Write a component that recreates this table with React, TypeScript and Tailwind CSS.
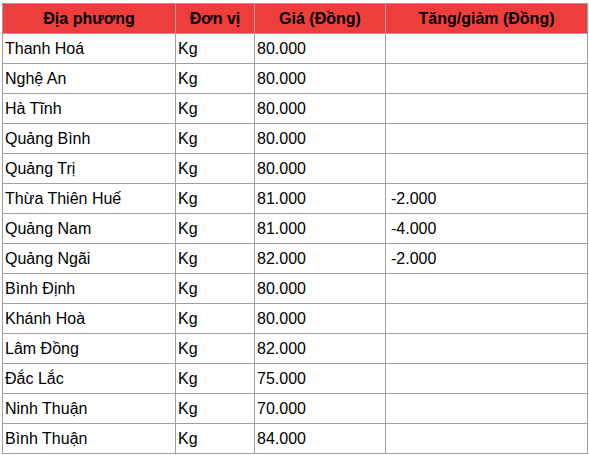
const rows: [string, string, string, string][] = [
  ["Thanh Hoá", "Kg", "80.000", ""],
  ["Nghệ An", "Kg", "80.000", ""],
  ["Hà Tĩnh", "Kg", "80.000", ""],
  ["Quảng Bình", "Kg", "80.000", ""],
  ["Quảng Trị", "Kg", "80.000", ""],
  ["Thừa Thiên Huế", "Kg", "81.000", "-2.000"],
  ["Quảng Nam", "Kg", "81.000", "-4.000"],
  ["Quảng Ngãi", "Kg", "82.000", "-2.000"],
  ["Bình Định", "Kg", "80.000", ""],
  ["Khánh Hoà", "Kg", "80.000", ""],
  ["Lâm Đồng", "Kg", "82.000", ""],
  ["Đắc Lắc", "Kg", "75.000", ""],
  ["Ninh Thuận", "Kg", "70.000", ""],
  ["Bình Thuận", "Kg", "84.000", ""],
];

export default function App() {
  return (
    <div
      className="bg-white w-[589px] h-[455px] pt-[3px] pl-[2px]"
      style={{ fontFamily: '"Liberation Sans", Arial, sans-serif' }}
    >
      <table className="w-[585px] table-fixed border-collapse text-[16px] text-black">
        <colgroup>
          <col className="w-[173px]" />
          <col className="w-[79px]" />
          <col className="w-[131px]" />
          <col className="w-[202px]" />
        </colgroup>
        <thead>
          <tr className="bg-[#ee3d3d]">
            {["Địa phương", "Đơn vị", "Giá (Đồng)", "Tăng/giảm (Đồng)"].map((h) => (
              <th
                key={h}
                className="h-[30px] border border-[#a0a0a0] px-[3px] py-0 text-center font-bold leading-[18px]"
              >
                {h}
              </th>
            ))}
          </tr>
        </thead>
        <tbody>
          {rows.map((r) => (
            <tr key={r[0]}>
              {r.map((c, i) => (
                <td
                  key={i}
                  className={
                    i === 3
                      ? "h-[30px] border border-[#a0a0a0] pl-[5px] pr-[3px] py-0 text-left leading-[18px]"
                      : "h-[30px] border border-[#a0a0a0] pl-[2px] pr-[3px] py-0 text-left leading-[18px]"
                  }
                >
                  {c}
                </td>
              ))}
            </tr>
          ))}
        </tbody>
      </table>
    </div>
  );
}
